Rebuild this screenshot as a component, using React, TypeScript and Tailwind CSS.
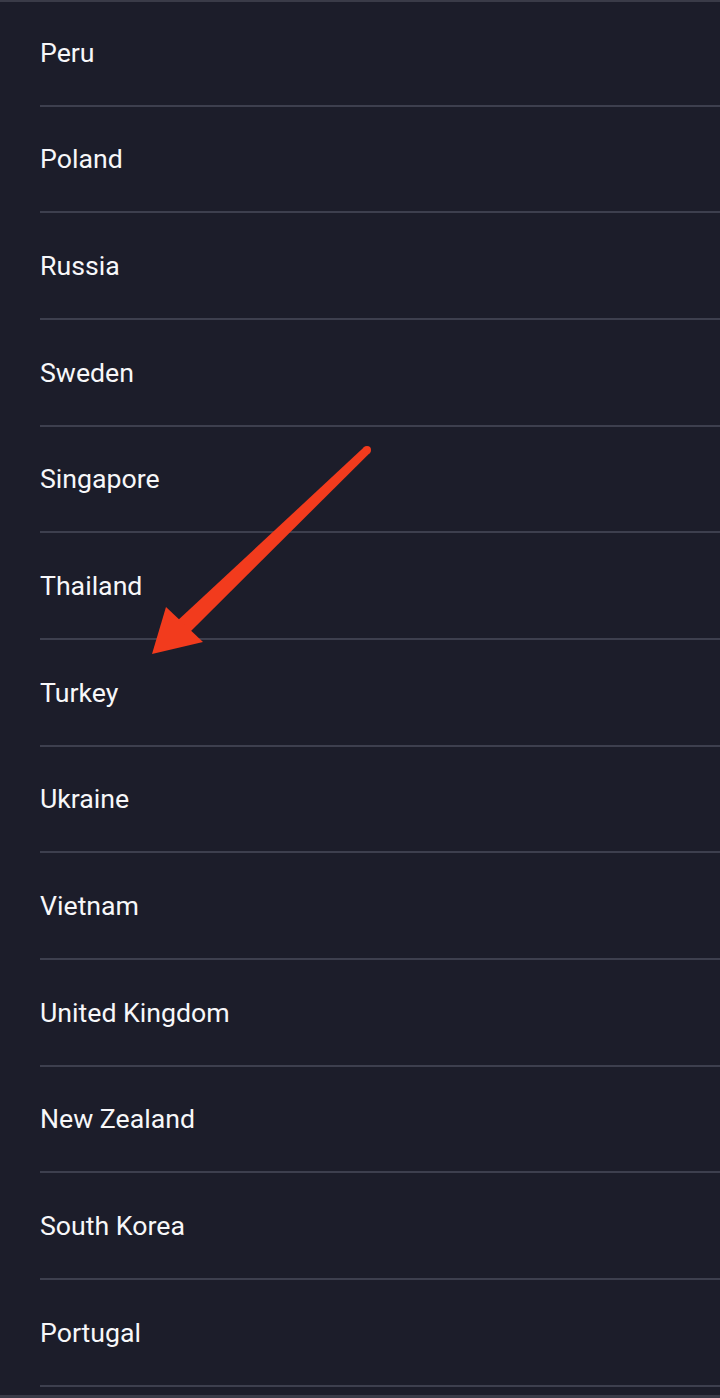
const countries = [
  'Peru',
  'Poland',
  'Russia',
  'Sweden',
  'Singapore',
  'Thailand',
  'Turkey',
  'Ukraine',
  'Vietnam',
  'United Kingdom',
  'New Zealand',
  'South Korea',
  'Portugal',
];

const Arrow = () => (
  <svg
    className="pointer-events-none absolute left-0 top-0"
    width="720"
    height="1398"
    viewBox="0 0 720 1398"
  >
    <circle cx="367" cy="450" r="4" fill="#f23b1d" />
    <polygon points="364.2,447.1 369.8,452.9 188,634 176,622" fill="#f23b1d" />
    <polygon points="152,654 166,607 203,642" fill="#f23b1d" />
  </svg>
);

export default function App() {
  return (
    <div
      className="relative h-[1398px] w-[720px] overflow-hidden bg-[#1c1d2a]"
      style={{ fontFamily: 'Roboto, "Noto Sans", sans-serif' }}
    >
      <div className="h-[2px] w-full bg-[#3a3b48]" />
      <ul className="flex flex-col">
        {countries.map((name, i) => (
          <li key={name} className={`pl-10 ${i === 0 ? 'h-[104.67px]' : 'h-[106.67px]'}`}>
            <div className="flex h-full items-center border-b-2 border-[#3d3f4e] text-[26.7px] text-[#f7f7f9]">
              <span className={i === 0 ? 'mt-[-1px]' : 'mt-[1px]'}>{name}</span>
            </div>
          </li>
        ))}
      </ul>
      <div className="mt-[8px] h-[3px] w-full bg-[#3a3b48]" />
      <Arrow />
    </div>
  );
}
